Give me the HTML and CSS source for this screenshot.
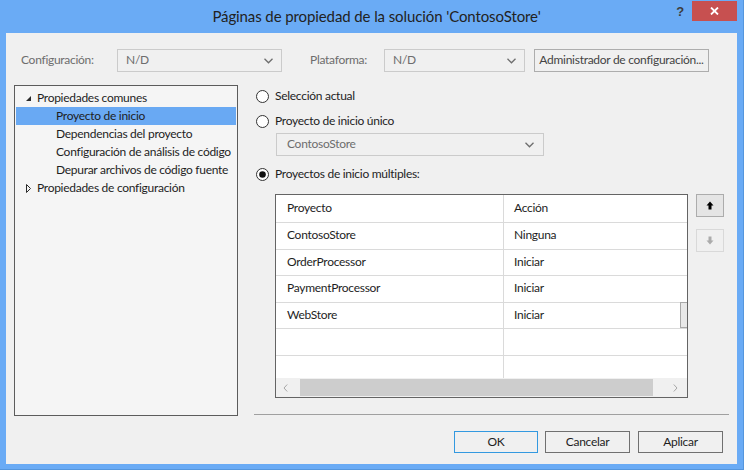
FILE: index.html
```html
<!DOCTYPE html>
<html lang="es">
<head>
<meta charset="utf-8">
<title>Páginas de propiedad de la solución</title>
<link rel="stylesheet" href="styles.css">
</head>
<body>
<div class="window">
  <div class="titlebar">
    <div class="title">Páginas de propiedad de la solución 'ContosoStore'</div>
    <div class="controls">
      <span class="help">?</span>
      <div class="close">
        <svg width="9" height="8" viewBox="0 0 9 8"><path d="M1 0.5 L8 7.5 M8 0.5 L1 7.5" stroke="#fff" stroke-width="1.8" fill="none"/></svg>
      </div>
    </div>
  </div>
  <div class="client">
    <div class="config-row">
      <span class="lbl lbl-config">Configuración:</span>
      <div class="combo combo-config"><span>N/D</span><svg class="chev" width="9" height="6" viewBox="0 0 9 6"><path d="M0.5 0.8 L4.5 4.8 L8.5 0.8" stroke="#6d6d6d" stroke-width="1.3" fill="none"/></svg></div>
      <span class="lbl lbl-plat">Plataforma:</span>
      <div class="combo combo-plat"><span>N/D</span><svg class="chev" width="9" height="6" viewBox="0 0 9 6"><path d="M0.5 0.8 L4.5 4.8 L8.5 0.8" stroke="#6d6d6d" stroke-width="1.3" fill="none"/></svg></div>
      <div class="btn btn-admin">Administrador de configuración...</div>
    </div>
    <div class="main">
      <div class="tree">
        <div class="node lvl0"><svg class="tri" width="7" height="7" viewBox="0 0 7 7"><path d="M6 1 L6 6 L1 6 Z" fill="#2a2a2a"/></svg><span>Propiedades comunes</span></div>
        <div class="node lvl1 selected"><span>Proyecto de inicio</span></div>
        <div class="node lvl1"><span>Dependencias del proyecto</span></div>
        <div class="node lvl1"><span>Configuración de análisis de código</span></div>
        <div class="node lvl1"><span>Depurar archivos de código fuente</span></div>
        <div class="node lvl0"><svg class="tri" width="7" height="9" viewBox="0 0 7 9"><path d="M1.5 0.5 L5.5 4.5 L1.5 8.5 Z" fill="none" stroke="#2a2a2a" stroke-width="1"/></svg><span>Propiedades de configuración</span></div>
      </div>
      <div class="right">
        <div class="opt opt1"><svg class="radio" width="13" height="13" viewBox="0 0 13 13"><circle cx="6.5" cy="6.5" r="6" fill="#fff" stroke="#333" stroke-width="1"/></svg><span>Selección actual</span></div>
        <div class="opt opt2"><svg class="radio" width="13" height="13" viewBox="0 0 13 13"><circle cx="6.5" cy="6.5" r="6" fill="#fff" stroke="#333" stroke-width="1"/></svg><span>Proyecto de inicio único</span></div>
        <div class="combo combo-single"><span>ContosoStore</span><svg class="chev" width="9" height="6" viewBox="0 0 9 6"><path d="M0.5 0.8 L4.5 4.8 L8.5 0.8" stroke="#6d6d6d" stroke-width="1.3" fill="none"/></svg></div>
        <div class="opt opt3"><svg class="radio" width="13" height="13" viewBox="0 0 13 13"><circle cx="6.5" cy="6.5" r="6" fill="#fff" stroke="#333" stroke-width="1"/><circle cx="6.5" cy="6.5" r="3.3" fill="#111"/></svg><span>Proyectos de inicio múltiples:</span></div>
        <div class="grid-wrap">
          <div class="grid">
            <div class="rows">
              <div class="row head"><div class="cell c1">Proyecto</div><div class="cell c2">Acción</div></div>
              <div class="row"><div class="cell c1">ContosoStore</div><div class="cell c2">Ninguna</div></div>
              <div class="row"><div class="cell c1">OrderProcessor</div><div class="cell c2">Iniciar</div></div>
              <div class="row"><div class="cell c1">PaymentProcessor</div><div class="cell c2">Iniciar</div></div>
              <div class="row"><div class="cell c1">WebStore</div><div class="cell c2">Iniciar</div></div>
              <div class="row"><div class="cell c1"></div><div class="cell c2"></div></div>
              <div class="row"><div class="cell c1"></div><div class="cell c2"></div></div>
            </div>
            <div class="hscroll">
              <div class="arr arr-l"><svg width="5" height="8" viewBox="0 0 5 8"><path d="M4.2 0.5 L1 4 L4.2 7.5" stroke="#a6a6a6" stroke-width="1" fill="none"/></svg></div>
              <div class="thumb"></div>
              <div class="arr arr-r"><svg width="5" height="8" viewBox="0 0 5 8"><path d="M0.8 0.5 L4 4 L0.8 7.5" stroke="#a6a6a6" stroke-width="1" fill="none"/></svg></div>
            </div>
            <div class="vthumb"></div>
          </div>
          <div class="updown">
            <div class="mv mv-up"><svg width="8" height="9" viewBox="0 0 8 9"><path d="M4 0.5 L7.5 4.5 L5.5 4.5 L5.5 8.5 L2.5 8.5 L2.5 4.5 L0.5 4.5 Z" fill="#000"/></svg></div>
            <div class="mv mv-down"><svg width="8" height="9" viewBox="0 0 8 9"><path d="M4 8.5 L7.5 4.5 L5.5 4.5 L5.5 0.5 L2.5 0.5 L2.5 4.5 L0.5 4.5 Z" fill="#ababab"/></svg></div>
          </div>
        </div>
        <div class="sep"></div>
      </div>
    </div>
    <div class="footer">
      <div class="btn btn-ok">OK</div>
      <div class="btn btn-cancel">Cancelar</div>
      <div class="btn btn-apply">Aplicar</div>
    </div>
  </div>
</div>
</body>
</html>
```

FILE: styles.css
```css
html, body {
  margin: 0;
  padding: 0;
}
body {
  font-family: "Lato", "Liberation Sans", sans-serif;
  font-size: 12px;
  letter-spacing: -0.28px;
  color: #1e1e1e;
}
.window {
  width: 744px;
  height: 470px;
  box-sizing: border-box;
  background: #6aabf5;
  padding: 0 7px 6px 6px;
  display: flex;
  flex-direction: column;
  box-shadow: inset -1px -1px 0 #5596dd;
}
.titlebar {
  height: 33px;
  flex: none;
  display: grid;
  grid-template-columns: 1fr auto 1fr;
  align-items: start;
}
.title {
  grid-column: 2;
  font-size: 15px;
  letter-spacing: -0.1px;
  line-height: 20px;
  padding-top: 6px;
  padding-left: 10px;
  color: #222;
  white-space: nowrap;
}
.controls {
  grid-column: 3;
  justify-self: end;
  display: flex;
  align-items: flex-start;
}
.help {
  font-family: "Liberation Sans", sans-serif;
  font-weight: bold;
  font-size: 13px;
  line-height: 13px;
  color: #3e3e3e;
  margin-top: 5px;
  margin-right: 8px;
}
.close {
  width: 45px;
  height: 20px;
  margin-top: 1px;
  background: #c75050;
  display: flex;
  align-items: center;
  justify-content: center;
}
.client {
  flex: 1;
  background: #f0f0f0;
  display: flex;
  flex-direction: column;
}
.config-row {
  display: flex;
  align-items: center;
  margin-top: 16px;
  height: 23px;
  padding-left: 15px;
}
.lbl {
  color: #6d6d6d;
  padding-bottom: 2px;
}
.lbl-config {
  width: 96px;
}
.lbl-plat {
  width: 74px;
  margin-left: 28px;
}
.combo {
  box-sizing: border-box;
  height: 23px;
  border: 1px solid #cbcbcb;
  background: #f0f0f0;
  color: #6d6d6d;
  display: flex;
  align-items: center;
  justify-content: space-between;
  padding: 0 8px 2px 8px;
}
.combo .chev {
  margin-top: 2px;
}
.combo-config {
  width: 165px;
}
.combo-plat {
  width: 141px;
}
.btn {
  box-sizing: border-box;
  border: 1px solid #adadad;
  background: #f0f0f0;
  display: flex;
  align-items: center;
  justify-content: center;
  padding-bottom: 2px;
}
.btn-admin {
  width: 175px;
  height: 23px;
  margin-left: 9px;
  color: #444;
  white-space: nowrap;
}
.main {
  display: flex;
  margin-top: 13px;
  padding-left: 8px;
}
.tree {
  box-sizing: border-box;
  width: 224px;
  height: 331px;
  border: 1px solid #5c5c5c;
  background: #f5f5f5;
  padding: 3px 1px;
}
.node {
  box-sizing: border-box;
  height: 18px;
  padding-bottom: 2px;
  display: flex;
  align-items: center;
  white-space: nowrap;
}
.node .tri {
  margin-top: 2px;
}
.node.lvl0 {
  padding-left: 9px;
}
.node.lvl0 .tri {
  margin-right: 5px;
}
.node.lvl1 {
  padding-left: 40px;
}
.node.selected {
  background: #69a9f3;
}
.right {
  margin-left: 18px;
  display: flex;
  flex-direction: column;
}
.opt {
  box-sizing: border-box;
  display: flex;
  align-items: center;
  height: 20px;
  gap: 6px;
}
.opt span {
  margin-bottom: 2px;
}
.opt1 {
  margin-top: 1px;
}
.opt2 {
  margin-top: 5px;
}
.combo-single {
  margin-top: 2px;
  margin-left: 20px;
  width: 268px;
  padding-left: 10px;
  padding-right: 9px;
}
.opt3 {
  margin-top: 8px;
}
.grid-wrap {
  display: flex;
  margin-top: 10px;
  margin-left: 19px;
}
.grid {
  position: relative;
  box-sizing: border-box;
  width: 413px;
  height: 204px;
  border: 1px solid #646464;
  background: #fff;
  display: flex;
  flex-direction: column;
}
.rows {
  height: 183px;
  overflow: hidden;
}
.row {
  display: grid;
  grid-template-columns: 228px 1fr;
  box-sizing: border-box;
  height: 26.6px;
  border-bottom: 1px solid #dadada;
}
.row.head {
  height: 28px;
}
.cell {
  box-sizing: border-box;
  display: flex;
  align-items: center;
  white-space: nowrap;
  padding-bottom: 2px;
}
.c1 {
  padding-left: 11px;
  border-right: 1px solid #dadada;
}
.c2 {
  padding-left: 10px;
}
.hscroll {
  height: 19px;
  box-sizing: border-box;
  padding: 1px 0;
  background: #f0f0f0;
  display: flex;
}
.arr {
  display: flex;
  align-items: center;
}
.arr-l {
  width: 24px;
  padding-left: 7px;
  box-sizing: border-box;
}
.arr-r {
  flex: 1;
  padding-left: 20px;
}
.thumb {
  width: 353px;
  background: #cdcdcd;
}
.vthumb {
  position: absolute;
  right: 0;
  top: 107px;
  width: 7px;
  height: 26px;
  box-sizing: border-box;
  border: 1px solid #a8a8a8;
  border-right: none;
  background: #e8e8e8;
}
.updown {
  margin-left: 8px;
  display: flex;
  flex-direction: column;
}
.mv {
  box-sizing: border-box;
  width: 28px;
  height: 23px;
  display: flex;
  align-items: center;
  justify-content: center;
}
.mv-up {
  border: 1px solid #acacac;
  background: #e5e5e5;
}
.mv-down {
  margin-top: 12px;
  border: 1px solid #d9d9d9;
  background: #f0f0f0;
}
.sep {
  margin-top: 16px;
  margin-left: -2px;
  width: 475px;
  height: 1px;
  background: #a0a0a0;
}
.footer {
  display: flex;
  justify-content: flex-end;
  margin-top: 15px;
  padding-right: 14px;
}
.footer .btn {
  height: 22px;
  width: 85px;
  border-color: #707070;
  color: #1e1e1e;
}
.footer .btn-ok {
  border-color: #3399e0;
  width: 84px;
}
.btn-cancel {
  margin-left: 7px;
}
.btn-apply {
  margin-left: 8px;
}
```
